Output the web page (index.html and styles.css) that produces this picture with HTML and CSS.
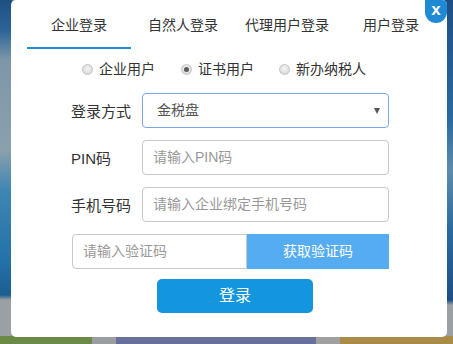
FILE: index.html
```html
<!DOCTYPE html>
<html lang="zh-CN">
<head>
<meta charset="utf-8">
<title>登录</title>
<link rel="stylesheet" href="styles.css">
</head>
<body>
<div class="stage">
  <div class="dialog">
    <div class="tabs">
      <div class="tab active">企业登录</div>
      <div class="tab">自然人登录</div>
      <div class="tab">代理用户登录</div>
      <div class="tab">用户登录</div>
    </div>
    <div class="radios">
      <label class="radio"><span class="dot"></span>企业用户</label>
      <label class="radio"><span class="dot checked"></span>证书用户</label>
      <label class="radio"><span class="dot"></span>新办纳税人</label>
    </div>
    <div class="form">
      <div class="row">
        <div class="label">登录方式</div>
        <div class="select">金税盘<span class="arrow"></span></div>
      </div>
      <div class="row">
        <div class="label">PIN码</div>
        <div class="input">请输入PIN码</div>
      </div>
      <div class="row">
        <div class="label">手机号码</div>
        <div class="input">请输入企业绑定手机号码</div>
      </div>
      <div class="row captcha">
        <div class="input code">请输入验证码</div>
        <div class="getcode">获取验证码</div>
      </div>
      <div class="submit-row">
        <div class="submit">登录</div>
      </div>
    </div>
    <div class="close">x</div>
  </div>
</div>
</body>
</html>
```

FILE: styles.css
```css
html, body {
  margin: 0;
  padding: 0;
}
body {
  width: 453px;
  height: 344px;
  overflow: hidden;
  font-family: "Liberation Sans", "Noto Sans CJK SC", sans-serif;
  color: #333;
}
.stage {
  width: 453px;
  height: 344px;
  background:
    linear-gradient(to right, #6b8a45 0, #6b8a45 92px, #9a9ea2 92px, #9a9ea2 116px, #67709a 116px, #67709a 316px, #a0a0a0 316px, #a0a0a0 340px, #a88c48 340px, #a88c48 100%) left bottom / 100% 8px no-repeat,
    linear-gradient(to bottom, #1f4f82 0, #2b6498 30px, #7d97a9 60px, #8ba0ad 150px, #3f86b3 190px, #2372a8 260px, #1d5d92 295px, #9aa0a4 300px, #9aa0a4 100%) left top / 12px 100% no-repeat,
    linear-gradient(to bottom, #1d4f86 0, #2a6aa0 120px, #5d8cad 170px, #2a6aa0 230px, #1d4f86 300px, #9aa0a4 305px, #9aa0a4 100%) right top / 8px 100% no-repeat,
    #5a7f9a;
  padding-left: 11px;
  box-sizing: border-box;
}
.dialog {
  position: relative;
  width: 436px;
  height: 337px;
  background: #fff;
  border-radius: 5px;
  box-sizing: border-box;
  padding-left: 16px;
}
.tabs {
  display: flex;
  height: 49px;
}
.tab {
  width: 104px;
  text-align: center;
  font-size: 14px;
  line-height: 50px;
  height: 47px;
  color: #333;
  border-bottom: 2px solid transparent;
}
.tab.active {
  border-bottom-color: #1b8fd8;
}
.radios {
  display: flex;
  margin-top: 10px;
  padding-left: 55px;
  height: 20px;
  align-items: center;
}
.radio {
  display: flex;
  align-items: center;
  font-size: 14px;
  line-height: 20px;
  color: #333;
  margin-right: 26px;
}
.radio:nth-child(2) { margin-right: 25px; }
.dot {
  width: 11px;
  height: 11px;
  border-radius: 50%;
  box-sizing: border-box;
  border: 1px solid #c4c4c4;
  background: radial-gradient(circle at 50% 40%, #f6f6f6 0, #dcdcdc 70%);
  margin-right: 6px;
  position: relative;
}
.dot.checked::after {
  content: "";
  position: absolute;
  left: 2px;
  top: 2px;
  width: 5px;
  height: 5px;
  border-radius: 50%;
  background: #5a5a5a;
}
.form {
  margin-top: 14px;
  padding-left: 44px;
}
.row {
  display: flex;
  align-items: center;
  height: 35px;
  margin-bottom: 12px;
}
.label {
  width: 71px;
  font-size: 15px;
  color: #333;
}
.select, .input {
  width: 247px;
  height: 35px;
  box-sizing: border-box;
  border: 1px solid #c9c9c9;
  border-radius: 4px;
  font-size: 14px;
  line-height: 33px;
  padding-left: 10px;
  color: #999;
}
.select {
  position: relative;
  border-color: #7ea5e6;
  color: #555;
  padding-left: 14px;
}
.arrow {
  position: absolute;
  right: 8px;
  top: 14px;
  width: 0;
  height: 0;
  border-left: 3.5px solid transparent;
  border-right: 3.5px solid transparent;
  border-top: 6px solid #555;
}
.captcha {
  padding-left: 1px;
}
.input.code {
  width: 175px;
  border-radius: 4px 0 0 4px;
}
.getcode {
  width: 142px;
  height: 35px;
  background: #56acf0;
  color: #fff;
  font-size: 14px;
  line-height: 35px;
  text-align: center;
}
.submit-row {
  display: flex;
  padding-left: 86px;
  margin-top: -2px;
}
.submit {
  width: 156px;
  height: 34px;
  background: #1496de;
  border-radius: 5px;
  color: #fff;
  font-size: 16px;
  line-height: 34px;
  text-align: center;
}
.close {
  position: absolute;
  right: 0;
  top: 0;
  width: 22px;
  height: 23px;
  background: #1e8ad4;
  border-radius: 0 5px 11px 11px;
  color: #fff;
  font-weight: bold;
  font-size: 17px;
  line-height: 19px;
  text-align: center;
}
```
